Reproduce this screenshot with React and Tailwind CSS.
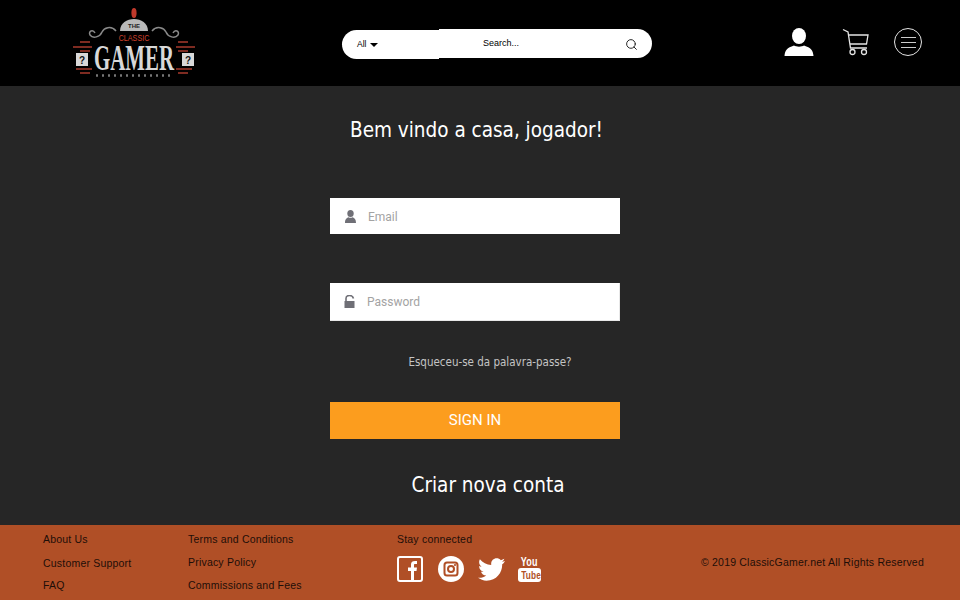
import { Search } from "lucide-react";

function Logo() {
    return (
        <svg width="130" height="80" viewBox="70 3 130 80" className="block">
            <ellipse cx="134" cy="13" rx="2.600" ry="5" fill="#c0392b" />
            <path d="M120 31C120 15 148 15 148 31Z" fill="#b9b9b9" />
            <text x="134" y="28" textAnchor="middle" fontSize="6" fontWeight="700" fill="#222" fontFamily="Liberation Sans, sans-serif">THE</text>
            <text transform="translate(134 41) scale(0.8 1)" textAnchor="middle" fontSize="9" fill="#d0402c" fontFamily="Liberation Sans, sans-serif">CLASSIC</text>
            <path d="M116 31C111 25 104 28 102 32C100 37 93 39 90 35C88 31 93 29 95 33" fill="none" stroke="#8a8a8a" strokeWidth="1.500" />
            <path d="M152 31C157 25 164 28 166 32C168 37 175 39 178 35C180 31 175 29 173 33" fill="none" stroke="#8a8a8a" strokeWidth="1.500" />
            <text transform="translate(134 70) scale(0.58 1)" textAnchor="middle" fontSize="36" fontWeight="700" fill="#d8d8d8" fontFamily="Liberation Serif, serif">GAMER</text>
            <path d="M80 42H90M73 47H92M80 51H90M76 69H92M80 73H90M178 42H188M176 47H195M178 51H188M176 69H192M178 73H188" stroke="#a83a2c" strokeWidth="1.400" />
            <rect x="76" y="53" width="12" height="13" fill="#d8d8d8" />
            <rect x="182" y="53" width="12" height="13" fill="#d8d8d8" />
            <text x="82" y="63.500" textAnchor="middle" fontSize="10" fontWeight="700" fill="#111" fontFamily="Liberation Sans, sans-serif">?</text>
            <text x="188" y="63.500" textAnchor="middle" fontSize="10" fontWeight="700" fill="#111" fontFamily="Liberation Sans, sans-serif">?</text>
            <path d="M96 75.500H172" stroke="#777" strokeWidth="2.500" strokeDasharray="2 4" />
        </svg>
    );
}

function CartIcon() {
    return (
        <svg width="28" height="28" viewBox="0 0 28 28" fill="none" stroke="#e4e4e4" strokeWidth="1.300">
            <path d="M1 1.500L6 4L8.500 20H25" />
            <path d="M6.500 7H26L24.500 16H8" />
            <circle cx="10.500" cy="24" r="2.500" />
            <circle cx="22" cy="24" r="2.500" />
        </svg>
    );
}

function PersonIcon() {
    return (
        <svg width="30" height="28" viewBox="0 0 30 28" fill="#fff">
            <ellipse cx="15" cy="8" rx="7" ry="8" />
            <path d="M0.500 28C1 22 3 20 10 17.500C12 19 18 19 20 17.500C27 20 29 22 29.500 28Z" />
        </svg>
    );
}

function MenuIcon() {
    return (
        <div className="flex h-7 w-7 flex-col items-center justify-center gap-1 rounded-full border border-[#e4e4e4]">
            <span className="h-px w-[15px] bg-[#ccc]" />
            <span className="h-px w-[15px] bg-[#ccc]" />
            <span className="h-px w-[15px] bg-[#ccc]" />
        </div>
    );
}

function Header() {
    return (
        <header className="flex h-[86px] items-start bg-black">
            <div className="ml-[70px] mt-[3px] w-[130px]">
                <Logo />
            </div>
            <div className="ml-[142px] mt-[29px] flex h-[30px] w-[310px] items-start">
                <div className="mt-px flex h-[29px] w-[97px] items-center gap-[4px] rounded-l-full bg-white pl-[15px] text-[8.5px] font-medium text-black">
                    All
                    <span className="h-0 w-0 border-x-[4.500px] border-t-[4px] border-x-transparent border-t-black" />
                </div>
                <div className="flex h-[29px] flex-1 items-center rounded-r-full bg-white pl-11 pr-[14px] pt-px text-[9px] text-black">
                    <span className="flex-1 font-medium">Search...</span>
                    <Search size={13} strokeWidth={1.800} className="text-[#222]" />
                </div>
            </div>
            <div className="ml-[133px] mt-[28px] -translate-x-px">
                <PersonIcon />
            </div>
            <div className="ml-[27px] mt-[28px]">
                <CartIcon />
            </div>
            <div className="ml-[24px] mt-[28px]">
                <MenuIcon />
            </div>
        </header>
    );
}

function LoginForm() {
    return (
        <main className="flex h-[439px] flex-col items-center bg-[#262626] text-center font-['DejaVu_Sans_Condensed','DejaVu_Sans',sans-serif]">
            <h1 className="mt-[26px] mr-[7px] h-[36px] whitespace-nowrap text-[20.500px] leading-[36px] text-white">Bem vindo a casa, jogador!</h1>
            <div className="mt-[50px] mr-[10px] flex h-[36px] w-[290px] items-center bg-white pl-[15px] font-['Roboto',sans-serif] text-[12px] text-[#a3a3a3]">
                <svg width="11" height="13" viewBox="0 0 11 13" fill="#6f6f76">
                    <ellipse cx="5.500" cy="3.500" rx="3.200" ry="3.500" />
                    <path d="M0 13C0 9 1.500 8 3.500 7.200C4.500 8 6.500 8 7.500 7.200C9.500 8 11 9 11 13Z" />
                </svg>
                <span className="ml-[12px] pt-px">Email</span>
            </div>
            <div className="mt-[49px] mr-[10px] flex h-[38px] w-[290px] items-center border-r border-b border-[#e8e8e8] bg-white pl-[14px] font-['Roboto',sans-serif] text-[12px] text-[#a3a3a3]">
                <svg width="11" height="13" viewBox="0 0 11 13" fill="#6f6f76">
                    <path d="M2 6V3.500C2 1.500 3.500 0.500 5.500 0.500C7.500 0.500 9 1.500 9.500 3.500" fill="none" stroke="#6f6f76" strokeWidth="1.600" />
                    <rect x="0.500" y="6" width="10" height="7" />
                </svg>
                <span className="ml-[12px]">Password</span>
            </div>
            <a className="mt-[32px] ml-[20px] h-[18px] whitespace-nowrap text-[11.500px] leading-[18px] text-[#c4c4c4]">Esqueceu-se da palavra-passe?</a>
            <button className="mt-[31px] mr-[10px] h-[37px] w-[290px] bg-[#fc9d1e] font-['Roboto',sans-serif] text-[15px] text-white">SIGN IN</button>
            <h2 className="mt-[28px] ml-[16px] h-[36px] whitespace-nowrap text-[20.500px] leading-[36px] text-white">Criar nova conta</h2>
        </main>
    );
}

function Socials() {
    return (
        <div className="mt-[10px] flex items-end">
            <svg width="26" height="26" viewBox="0 0 26 26">
                <rect x="1" y="1" width="24" height="24" rx="2" fill="none" stroke="#fff" strokeWidth="2" />
                <path d="M14 25V15H11V11.500H14V8.500C14 5.500 16 4.500 20 5V8H18C17.300 8 17 8.400 17 9V11.500H20L19.500 15H17V25Z" fill="#fff" />
            </svg>
            <svg width="26" height="26" viewBox="0 0 26 26" className="ml-[15px]">
                <circle cx="13" cy="13" r="13" fill="#fff" />
                <rect x="6.500" y="6.500" width="13" height="13" rx="2.500" fill="none" stroke="#b04f26" strokeWidth="2" />
                <circle cx="13" cy="13" r="3" fill="none" stroke="#b04f26" strokeWidth="2" />
                <circle cx="17" cy="9" r="1.100" fill="#b04f26" />
            </svg>
            <svg width="27" height="23" viewBox="0 0 24 20" fill="#fff" className="ml-[14px] mb-px">
                <path d="M24 2.400c-.9.4-1.800.7-2.800.8 1-.6 1.800-1.600 2.200-2.700-1 .6-2 1-3.100 1.200C19.300.6 18 0 16.600 0c-2.700 0-4.900 2.200-4.900 4.900 0 .4 0 .8.1 1.100C7.700 5.800 4.100 3.900 1.700.9c-.4.7-.7 1.600-.7 2.500 0 1.700.9 3.200 2.200 4.100-.8 0-1.600-.2-2.200-.6v.1c0 2.400 1.700 4.400 3.900 4.800-.4.1-.8.2-1.300.2-.3 0-.6 0-.9-.1.6 2 2.400 3.400 4.600 3.400-1.700 1.300-3.800 2.100-6.100 2.100-.4 0-.8 0-1.200-.1C2.200 18.300 4.800 20 7.500 20c9.100 0 14-7.500 14-14v-.6c1-.7 1.800-1.600 2.500-3z" />
            </svg>
            <div className="ml-[13px] flex h-[25px] w-[23px] flex-col items-center font-['Liberation_Sans',sans-serif] font-bold leading-none text-white">
                <span className="scale-x-75 text-[12px] leading-[11px]">You</span>
                <span className="w-[23px] rounded-[3px] bg-white text-center text-[11px] leading-[14px] text-[#b04f26]">
                    <span className="inline-block scale-x-75">Tube</span>
                </span>
            </div>
        </div>
    );
}

function Footer() {
    return (
        <footer className="flex h-[75px] bg-[#b04f26] pl-[43px] font-['Liberation_Sans',sans-serif] text-[10.500px] tracking-[0.2px] text-[#1d0e08]">
            <div className="flex w-[145px] flex-col pt-[7px] leading-[14px]">
                <span>About Us</span>
                <span className="mt-[10px]">Customer Support</span>
                <span className="mt-[8px]">FAQ</span>
            </div>
            <div className="flex w-[209px] flex-col gap-[9px] pt-[7px] leading-[14px]">
                <span>Terms and Conditions</span>
                <span>Privacy Policy</span>
                <span>Commissions and Fees</span>
            </div>
            <div className="w-[304px] pt-[7px] leading-[14px]">
                <span>Stay connected</span>
                <Socials />
            </div>
            <div className="pt-[30px] leading-[14px] whitespace-nowrap">© 2019 ClassicGamer.net All Rights Reserved</div>
        </footer>
    );
}

export default function App() {
    return (
        <div className="h-[600px] w-[960px] overflow-hidden font-['Liberation_Sans',sans-serif]">
            <Header />
            <LoginForm />
            <Footer />
        </div>
    );
}
